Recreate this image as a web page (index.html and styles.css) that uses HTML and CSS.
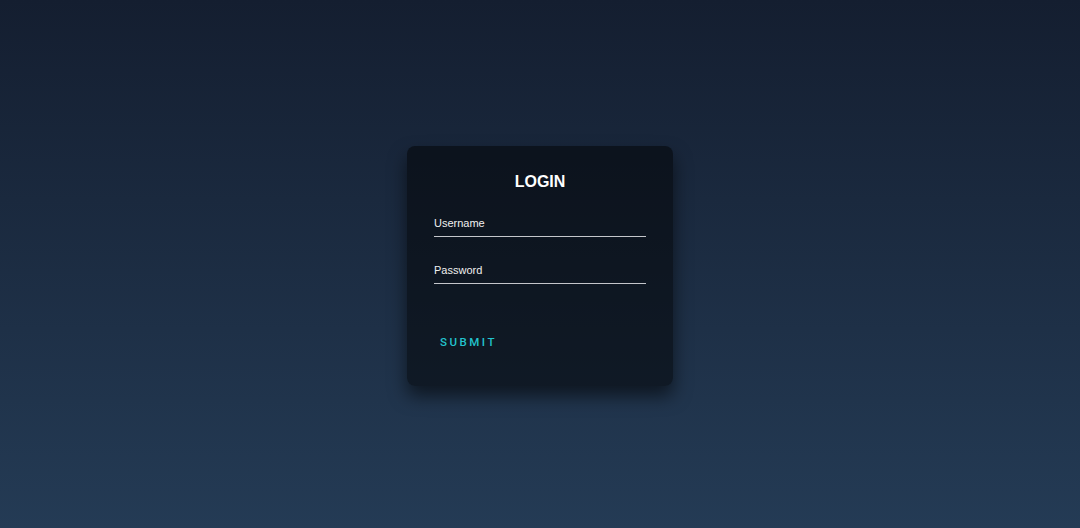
FILE: index.html
```html
<!DOCTYPE html>
<html lang="en">
<head>
<meta charset="utf-8">
<title>Login</title>
<link rel="stylesheet" href="styles.css">
</head>
<body>
<main class="page">
  <form class="login-box">
    <h2 class="login-title">LOGIN</h2>
    <div class="field">
      <input class="field-input" type="text" placeholder="Username">
    </div>
    <div class="field">
      <input class="field-input" type="password" placeholder="Password">
    </div>
    <button class="submit-btn" type="button">SUBMIT</button>
  </form>
</main>
</body>
</html>
```

FILE: styles.css
```css
html, body {
  margin: 0;
  padding: 0;
  height: 100%;
}

body {
  background: linear-gradient(#141e30, #243b55);
  font-family: "Liberation Sans", Arial, sans-serif;
}

.page {
  height: 100%;
  display: flex;
  align-items: center;
  justify-content: center;
}

.login-box {
  width: 266px;
  box-sizing: border-box;
  padding: 27px 27px 29px;
  margin-top: 4px;
  background: rgba(0, 0, 0, 0.5);
  border-radius: 8px;
  box-shadow: 0 10px 18px rgba(0, 0, 0, 0.55);
  display: flex;
  flex-direction: column;
}

.login-title {
  margin: 0 0 26px;
  font-size: 16px;
  line-height: 18px;
  font-weight: 700;
  color: #ffffff;
  text-align: center;
}

.field {
  margin-bottom: 27px;
}

.field:last-of-type {
  margin-bottom: 44px;
}

.field-input {
  display: block;
  width: 100%;
  height: 20px;
  box-sizing: border-box;
  margin: 0;
  padding: 0 0 7px;
  border: none;
  border-bottom: 1px solid #c4c6cb;
  background: transparent;
  outline: none;
  font-family: "Liberation Sans", Arial, sans-serif;
  font-size: 11px;
  line-height: 12px;
  color: #ececec;
}

.field-input::placeholder {
  color: #f0f0f0;
  opacity: 1;
}

.submit-btn {
  align-self: flex-start;
  margin: 0;
  padding: 8px 6px;
  border: none;
  background: transparent;
  font-family: Roboto, "Liberation Sans", sans-serif;
  font-size: 11.5px;
  line-height: 13px;
  font-weight: 500;
  letter-spacing: 2.5px;
  color: #22c3ce;
  cursor: pointer;
}
```
